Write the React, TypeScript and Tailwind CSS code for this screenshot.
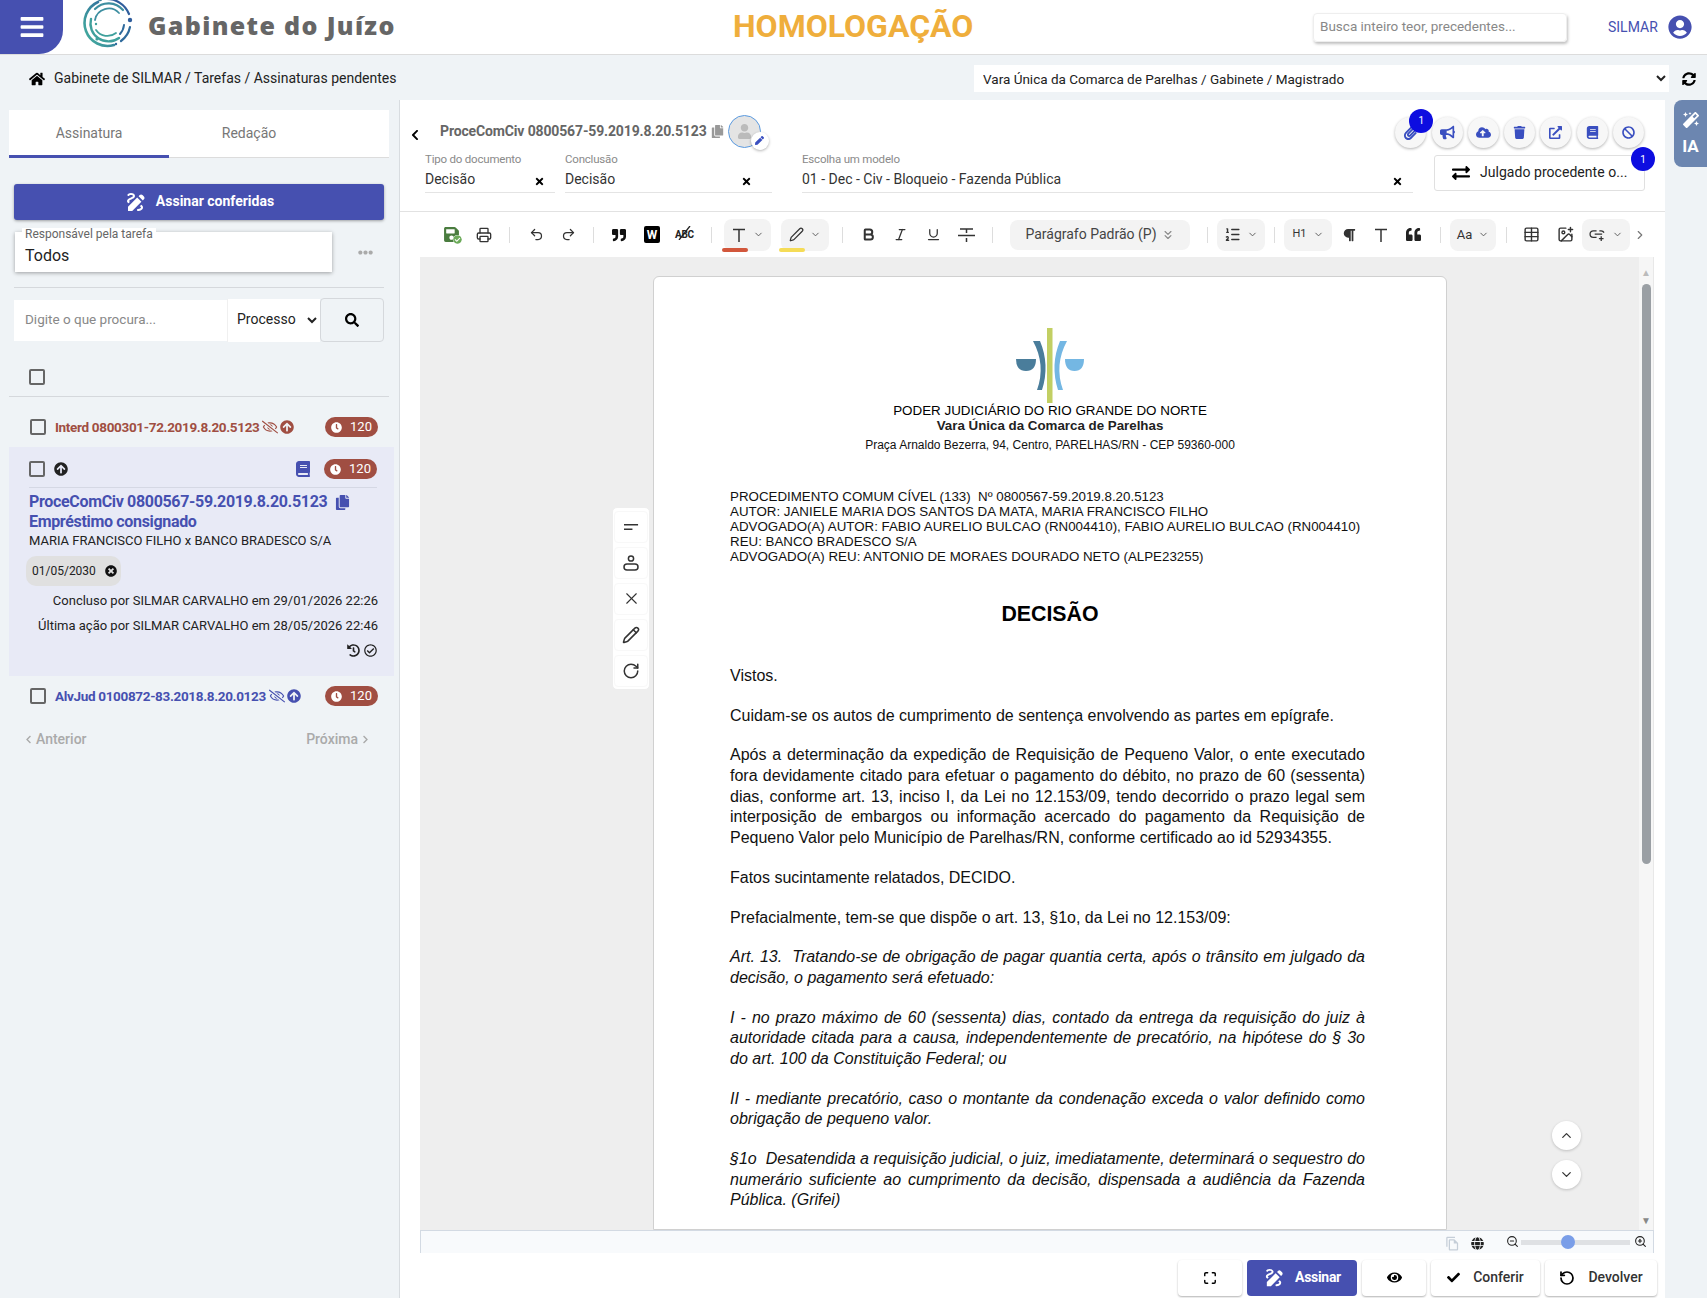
import type { ReactNode } from 'react';
import {
  FaArrowCircleUp, FaBan, FaBars, FaBook, FaBullhorn, FaCheck, FaCheckCircle, FaChevronLeft, FaChevronRight, FaClock,
  FaCloudUploadAlt, FaCopy, FaEllipsisH, FaExchangeAlt, FaExternalLinkAlt, FaEye, FaGlobe, FaHistory, FaHome,
  FaMagic, FaParagraph, FaPaperclip, FaPen, FaQuoteLeft, FaQuoteRight, FaRegCheckCircle, FaRegEyeSlash, FaSave, FaSearch, FaSyncAlt,
  FaTimes, FaTimesCircle, FaTrash, FaUser, FaUserCircle,
} from 'react-icons/fa';
import { MdDraw, MdOutlineFileCopy } from 'react-icons/md';
import {
  Bold, ChevronDown, ChevronRight, ChevronUp, ChevronsDown, ImagePlus, Italic, ListOrdered, Maximize,
  Pen, Pencil, Printer, Redo2, RotateCcw, RotateCw, Table, Underline, Undo2, X,
  ZoomIn, ZoomOut,
} from 'lucide-react';

// Logo do sistema (arcos concentricos)
function CircleLogo() {
  return (
    <svg viewBox="0 0 50 50" className="w-[50px] h-[50px]" fill="none" strokeLinecap="round">
      <defs>
        <linearGradient id="lg" x1="0" y1="1" x2="1" y2="0">
          <stop offset="0" stopColor="#45b39d" />
          <stop offset="1" stopColor="#2c5f9e" />
        </linearGradient>
      </defs>
      <path d="M15 4 A23 23 0 0 0 31 47" stroke="url(#lg)" strokeWidth="2.6" />
      <path d="M22 1 A24 24 0 0 1 46 16" stroke="#2f5d9c" strokeWidth="2.2" />
      <path d="M47 29 A23 23 0 0 1 38 43" stroke="#2f6a9c" strokeWidth="2.2" />
      <path d="M40 12 A19 19 0 0 0 12 11" stroke="#3d8ea0" strokeWidth="2.2" />
      <path d="M8 21 A18 18 0 0 0 36 40" stroke="#3fa09c" strokeWidth="2.4" />
      <path d="M37 36 A16 16 0 0 0 41 27" stroke="#2f6a9c" strokeWidth="2" />
      <path d="M36 15 A14 14 0 0 0 12 22" stroke="#3d8ea0" strokeWidth="1.8" />
      <path d="M13 32 A14 14 0 0 0 33 35" stroke="#3fa09c" strokeWidth="1.8" />
      <circle cx="17" cy="1" r="2.2" fill="#3a7f9c" />
      <circle cx="47" cy="22" r="2.2" fill="#2f5d9c" />
      <circle cx="13" cy="26" r="1.2" fill="#3fa09c" />
      <circle cx="14" cy="41" r="1.6" fill="#3fa09c" />
      <circle cx="33" cy="46" r="1.2" fill="#2f6a9c" />
    </svg>
  );
}

// Brasao do tribunal
function CourtLogo() {
  return (
    <svg viewBox="0 0 68 75" className="w-[68px] h-[75px]">
      <rect x="31" y="0" width="5.5" height="75" fill="#c2cf63" />
      <path d="M17 13 L24 13 Q34 37 26 62 L21 62 Q30 37 17 13 Z" fill="#4a7d9b" />
      <path d="M51 13 L44 13 Q34 37 42 62 L47 62 Q38 37 51 13 Z" fill="#74b7e3" />
      <path d="M0 31 H20 Q20 43 10 43 Q0 43 0 31 Z" fill="#4a7d9b" />
      <path d="M49 31 H68 Q68 43 58.5 43 Q49 43 49 31 Z" fill="#74b7e3" />
    </svg>
  );
}

function Badge120() {
  return (
    <span className="w-[53px] h-[20px] rounded-full bg-[#a04e42] text-white text-[13px] flex items-center justify-center gap-[8px] shrink-0">
      <FaClock className="text-[11px]" />
      120
    </span>
  );
}

function Box() {
  return <span className="w-[16px] h-[16px] border-2 border-[#666] rounded-[2px] shrink-0" />;
}

function RoundAction({ children, badge }: { children: ReactNode; badge?: boolean }) {
  return (
    <span className="relative w-[31px] h-[31px] rounded-full bg-[#f7f7f7] shadow-[0_1px_3px_rgba(0,0,0,0.3)] text-[#3a4fc0] flex items-center justify-center text-[15px]">
      {children}
      {badge && (
        <span className="absolute -top-[8px] left-[14px] w-[24px] h-[24px] rounded-full bg-[#0d0de0] text-white text-[10px] flex items-center justify-center">1</span>
      )}
    </span>
  );
}

function Sep({ className }: { className: string }) {
  return <span className={`w-px h-[16px] bg-[#ddd] shrink-0 ${className}`} />;
}

function Drop({ children, className = '' }: { children: ReactNode; className?: string }) {
  return (
    <span className={`h-[32px] rounded-[8px] bg-[#f3f3f3] flex items-center justify-center gap-[6px] text-[#333] shrink-0 ${className}`}>
      {children}
      <ChevronDown size={11} className="text-[#555]" />
    </span>
  );
}

function Field({ label, value, className, inset }: { label: string; value: string; className: string; inset: string }) {
  return (
    <div className={`h-[41px] border-b border-[#e4e4e4] relative ${className}`}>
      <div className="text-[11.5px] text-[#8a8a8a] leading-[14px] tracking-[-0.2px]">{label}</div>
      <div className="text-[14px] text-[#333] leading-[20px] mt-[3px]">{value}</div>
      <FaTimes className={`absolute top-[24px] text-[11px] text-black ${inset}`} />
    </div>
  );
}

function TIcon() {
  return (
    <svg viewBox="0 0 16 16" className="w-[16px] h-[16px]" fill="none" stroke="#333" strokeWidth="1.5"><path d="M2 2.5H14M8 2.5V15" /></svg>
  );
}

function FloatBtn({ children }: { children: ReactNode }) {
  return <span className="w-[34px] h-[32px] flex items-center justify-center text-[#333] border border-[#f8f8f8] rounded-[4px]">{children}</span>;
}

function BottomBtn({ children, className = '' }: { children: ReactNode; className?: string }) {
  return (
    <button className={`h-[36px] rounded-[4px] bg-white shadow-[0_1px_2px_rgba(0,0,0,0.3)] flex items-center justify-center text-[14px] text-[#333] font-medium ${className}`}>
      {children}
    </button>
  );
}

function Para({ children, italic }: { children: ReactNode; italic?: boolean }) {
  return <p className={`text-justify mb-[19px] ${italic ? 'italic' : ''}`}>{children}</p>;
}

export default function App() {
  return (
    <div className="w-[1707px] h-[1298px] overflow-hidden bg-[#eff3f6] flex flex-col font-[family-name:Roboto,sans-serif] text-[#333]">
      {/* Header */}
      <header className="h-[55px] shrink-0 bg-white border-b border-[#dcdcdc] flex items-center">
        <div className="w-[63px] h-[54px] bg-[#4650b0] rounded-br-[24px] flex items-center justify-center text-white text-[26px]">
          <FaBars />
        </div>
        <div className="ml-[20px] -mt-[8px]"><CircleLogo /></div>
        <div className="ml-[15px] w-[248px] whitespace-nowrap text-[25px] font-extrabold text-[#666] tracking-[1.35px] font-[family-name:'Open_Sans',sans-serif] -mt-[3px]">Gabinete do Juízo</div>
        <div className="ml-[337px] text-[32px] font-bold text-[#efae3c] leading-none w-[580px] -mt-[2px]">HOMOLOGAÇÃO</div>
        <div className="w-[254px] h-[29px] rounded-[4px] border border-[#eee] shadow-[1px_2px_3px_rgba(0,0,0,0.25)] text-[13.5px] text-[#888] px-[6px] pb-[1px] flex items-center">Busca inteiro teor, precedentes...</div>
        <div className="ml-[41px] text-[14px] text-[#4650b0]">SILMAR</div>
        <FaUserCircle className="ml-[10px] text-[24px] text-[#4650b0]" />
      </header>

      {/* Breadcrumb */}
      <div className="h-[45px] shrink-0 flex items-center relative pt-[2px]">
        <FaHome className="ml-[29px] text-[16px] text-black" />
        <span className="ml-[9px] text-[14px] w-[920px] text-[#222]">Gabinete de SILMAR / Tarefas / Assinaturas pendentes</span>
        <select className="w-[695px] h-[27px] bg-white text-[13.5px] text-[#222] px-[5px] outline-none">
          <option>Vara Única da Comarca de Parelhas / Gabinete / Magistrado</option>
        </select>
        <FaSyncAlt className="ml-[13px] text-[14px] text-black" />
      </div>

      <div className="flex-1 flex min-h-0">
        {/* Left panel */}
        <aside className="w-[400px] shrink-0 border-r border-[#d8dce0] pt-[10px] flex flex-col">
          <div className="ml-[9px] w-[380px] h-[48px] bg-white border-b border-[#dcdcdc] flex text-[14px] text-[#777]">
            <div className="w-[160px] h-[48px] border-b-[3px] border-[#4650b0] flex items-center justify-center pt-[1px]">Assinatura</div>
            <div className="w-[160px] flex items-center justify-center">Redação</div>
          </div>
          <button className="ml-[14px] mt-[26px] w-[370px] h-[36px] rounded-[3px] bg-[#4650b0] shadow-[0_1px_3px_rgba(0,0,0,0.35)] text-white text-[14px] font-bold flex items-center justify-center gap-[8px] pb-[1px]">
            <MdDraw className="text-[24px]" />
            Assinar conferidas
          </button>
          <div className="ml-[15px] mt-[12px] flex items-center h-[40px]">
            <div className="relative w-[317px] h-[40px] bg-white shadow-[0_1px_4px_rgba(0,0,0,0.35)] text-[16px] text-[#222] pl-[10px] pt-[12px] leading-[24px]">
              <span className="absolute left-[7px] -top-[4px] bg-white px-[3px] text-[12px] leading-[12px] text-[#666]">Responsável pela tarefa</span>
              Todos
            </div>
            <FaEllipsisH className="ml-[26px] text-[15px] text-[#aaa]" />
          </div>
          <div className="ml-[14px] w-[370px] mt-[15px] border-t border-[#d5d8dc]" />
          <div className="ml-[14px] mt-[10px] flex items-center w-[370px]">
            <div className="w-[213px] h-[41px] bg-white text-[13.5px] text-[#888] pl-[11px] pb-[1px] flex items-center">Digite o que procura...</div>
            <select className="w-[93px] h-[43px] bg-white text-[14px] text-[#222] pl-[5px] pb-[2px] outline-none border-l border-[#f0f0f0]">
              <option>Processo</option>
            </select>
            <div className="w-[64px] h-[44px] rounded-[4px] border border-[#d5d8dc] flex items-center justify-center text-black text-[14px]">
              <FaSearch />
            </div>
          </div>
          <div className="ml-[9px] w-[380px] h-[55px] border-b border-[#d5d8dc] flex items-center pl-[20px] pt-[15px]">
            <Box />
          </div>
          <div className="h-[50px] flex items-center pl-[30px] pr-[21px] pt-[10px]">
            <Box />
            <span className="ml-[9px] text-[13.5px] font-bold text-[#a04e42] tracking-[-0.33px]">Interd 0800301-72.2019.8.20.5123</span>
            <FaRegEyeSlash className="ml-[3px] text-[16px] text-[#a04e42]" />
            <FaArrowCircleUp className="ml-[2px] text-[14px] text-[#a04e42]" />
            <span className="ml-auto"><Badge120 /></span>
          </div>
          <div className="ml-[9px] w-[385px] h-[229px] bg-[#e8eaf6] pl-[20px] pr-[17px] pt-[9px]">
            <div className="flex items-center h-[26px]">
              <Box />
              <FaArrowCircleUp className="ml-[9px] text-[14px] text-[#222]" />
              <FaBook className="ml-auto text-[16px] text-[#4650b0]" />
              <span className="ml-[13px]"><Badge120 /></span>
            </div>
            <div className="border-t border-[#d5d8e4] mt-[5px] pt-[4px] text-[16px] leading-[20px] font-bold text-[#4650b0] tracking-[-0.33px]">
              <div className="flex items-center">ProceComCiv 0800567-59.2019.8.20.5123<FaCopy className="ml-[8px] text-[15px]" /></div>
              <div>Empréstimo consignado</div>
            </div>
            <div className="-mt-[1px] text-[13px] leading-[20px] text-[#222]">MARIA FRANCISCO FILHO x BANCO BRADESCO S/A</div>
            <div className="-ml-[3px] mt-[5px] w-[95px] h-[30px] rounded-[10px] bg-[#e0e0e0] text-[12px] text-[#222] flex items-center pl-[6px]">
              01/05/2030
              <FaTimesCircle className="ml-[9px] text-[12px] text-[#111]" />
            </div>
            <div className="mt-[2px] -mr-[1px] text-[13px] leading-[25px] text-right text-[#222]">
              <div>Concluso por SILMAR CARVALHO em 29/01/2026 22:26</div>
              <div>Última ação por SILMAR CARVALHO em 28/05/2026 22:46</div>
            </div>
            <div className="flex justify-end items-center gap-[4px] mt-[6px] text-[13px] text-[#222]">
              <FaHistory />
              <FaRegCheckCircle />
            </div>
          </div>
          <div className="h-[40px] flex items-center pl-[30px] pr-[21px]">
            <Box />
            <span className="ml-[9px] text-[13.5px] font-bold text-[#4650b0] tracking-[-0.33px]">AlvJud 0100872-83.2018.8.20.0123</span>
            <FaRegEyeSlash className="ml-[3px] text-[16px] text-[#4650b0]" />
            <FaArrowCircleUp className="ml-[2px] text-[14px] text-[#4650b0]" />
            <span className="ml-auto"><Badge120 /></span>
          </div>
          <div className="mt-[3px] h-[40px] flex items-center justify-between pl-[24px] pr-[29px] text-[14px] font-medium text-[#aaa]">
            <span className="flex items-center gap-[3px]"><FaChevronLeft className="text-[9px]" />Anterior</span>
            <span className="flex items-center gap-[3px]">Próxima<FaChevronRight className="text-[9px]" /></span>
          </div>
        </aside>

        {/* Document panel */}
        <main className="w-[1265px] shrink-0 bg-white flex flex-col min-h-0">
          <div className="h-[112px] shrink-0 border-b border-[#e2e2e2]">
            <div className="h-[62px] flex items-center pl-[9px]">
              <FaChevronLeft className="text-[12px] text-black mt-[8px]" />
              <span className="ml-[19px] text-[14px] font-bold text-[#666] tracking-[-0.14px]">ProceComCiv 0800567-59.2019.8.20.5123</span>
              <FaCopy className="ml-[4px] text-[13px] text-[#999]" />
              <span className="relative ml-[4px] w-[33px] h-[33px] rounded-full bg-[#e4e4e4] border border-[#5a9ae0] flex items-center justify-center text-[#bbb] text-[15px]">
                <FaUser />
                <span className="absolute -right-[9px] -bottom-[3px] w-[18px] h-[18px] rounded-full bg-white shadow-[0_1px_3px_rgba(0,0,0,0.3)] flex items-center justify-center text-[#3a4fc0] text-[9px]"><FaPen /></span>
              </span>
              <div className="ml-auto mr-[21px] flex items-center gap-[5.3px] mt-[2px]">
                <RoundAction badge><FaPaperclip /></RoundAction>
                <RoundAction><FaBullhorn /></RoundAction>
                <RoundAction><FaCloudUploadAlt /></RoundAction>
                <RoundAction><FaTrash className="text-[13px]" /></RoundAction>
                <RoundAction><FaExternalLinkAlt className="text-[13px]" /></RoundAction>
                <RoundAction><FaBook className="text-[13px]" /></RoundAction>
                <RoundAction><FaBan className="text-[13px]" /></RoundAction>
              </div>
            </div>
            <div className="flex pl-[25px] -mt-[10px] items-start">
              <Field label="Tipo do documento" value="Decisão" className="w-[130px]" inset="right-[10px]" />
              <Field label="Conclusão" value="Decisão" className="w-[207px] ml-[10px]" inset="right-[20px]" />
              <Field label="Escolha um modelo" value="01 - Dec - Civ - Bloqueio - Fazenda Pública" className="w-[611px] ml-[30px]" inset="right-[10px]" />
              <div className="relative ml-[21px] mt-[3px] w-[211px] h-[36px] rounded-[3px] border border-[#e0e0e0] flex items-center pl-[17px] gap-[10px] text-[14px] text-[#222] tracking-[0.04px] pb-[1px]">
                <FaExchangeAlt className="text-[18px] text-black" />
                Julgado procedente o...
                <span className="absolute -right-[11px] -top-[9px] w-[24px] h-[24px] rounded-full bg-[#0d0de0] text-white text-[10px] flex items-center justify-center">1</span>
              </div>
            </div>
          </div>

          {/* Toolbar */}
          <div className="h-[45px] shrink-0 flex items-center pl-[43px] text-[#333]">
            <span className="relative w-[17px] text-[17px] text-[#4a7c3f]">
              <FaSave />
              <FaCheckCircle className="absolute -right-[2px] -bottom-[1px] text-[9px] text-[#6cab5a] bg-white rounded-full" />
            </span>
            <Printer size={16} className="ml-[16px]" />
            <Sep className="ml-[17px]" />
            <Undo2 size={15} className="ml-[19px]" />
            <Redo2 size={15} className="ml-[17px]" />
            <Sep className="ml-[17px]" />
            <FaQuoteRight className="ml-[18px] text-[14px] text-[#111]" />
            <span className="ml-[18px] w-[16px] h-[17px] rounded-[2px] bg-black text-white text-[12px] font-bold flex items-center justify-center">W</span>
            <span className="relative ml-[15px] w-[20px] text-[10px] font-bold text-[#222] tracking-[-0.3px]">
              ABC
              <svg viewBox="0 0 20 14" className="absolute left-0 -top-[1px] w-[20px] h-[14px]"><path d="M4 14L15 0" stroke="#222" strokeWidth="1.3" /></svg>
            </span>
            <Sep className="ml-[16px]" />
            <span className="relative ml-[12px]">
              <Drop className="w-[47px]"><TIcon /></Drop>
              <span className="absolute left-[-2px] bottom-[-1px] w-[26px] h-[4px] rounded-[2px] bg-[#d2573c]" />
            </span>
            <span className="relative ml-[10px]">
              <Drop className="w-[48px]"><Pen size={15} /></Drop>
              <span className="absolute left-[-2px] bottom-[-1px] w-[26px] h-[4px] rounded-[2px] bg-[#f5dc57]" />
            </span>
            <Sep className="ml-[13px]" />
            <Bold size={15} strokeWidth={3.2} className="ml-[18px]" />
            <Italic size={15} className="ml-[17px]" />
            <Underline size={15} className="ml-[18px]" />
            <svg viewBox="0 0 17 16" className="ml-[17px] w-[17px] h-[16px]" fill="none" stroke="#333" strokeWidth="1.5"><path d="M2 2H15M8.5 2V6M0 8.5H17M8.5 11V15" /></svg>
            <Sep className="ml-[17px]" />
            <span className="ml-[17px] w-[180px] h-[30px] rounded-[8px] bg-[#f3f3f3] flex items-center justify-center gap-[4px] text-[14px] text-[#444] shrink-0">
              Parágrafo Padrão (P)
              <ChevronsDown size={14} className="text-[#888]" />
            </span>
            <Sep className="ml-[17px]" />
            <Drop className="ml-[9px] w-[48px]"><ListOrdered size={17} /></Drop>
            <Sep className="ml-[9px]" />
            <Drop className="ml-[9px] w-[48px] text-[11px]">H1</Drop>
            <FaParagraph className="ml-[9px] text-[14px] w-[16px]" />
            <span className="ml-[16px]"><TIcon /></span>
            <FaQuoteLeft className="ml-[17px] text-[15px] text-[#222]" />
            <Sep className="ml-[19px]" />
            <Drop className="ml-[9px] w-[46px] text-[13px]">Aa</Drop>
            <Sep className="ml-[10px]" />
            <Table size={17} className="ml-[16px]" />
            <ImagePlus size={17} className="ml-[17px]" />
            <Drop className="ml-[8px] w-[48px]">
              <svg viewBox="0 0 18 14" className="w-[17px] h-[13px]" fill="none" stroke="#333" strokeWidth="1.4"><path d="M8 3H4.5a3.5 3.5 0 0 0 0 7H8M6 6.5H14M11 3H13a3.5 3.5 0 0 1 3 2M13 9V14M10.5 11.5H15.5" /></svg>
            </Drop>
            <ChevronRight size={14} className="ml-[3px] text-[#777]" />
          </div>

          {/* Editor */}
          <div className="relative flex-1 min-h-0 ml-[20px] mr-[11px] bg-[#eee] overflow-hidden flex">
            <div className="ml-[233px] mt-[19px] w-[794px] shrink-0 bg-white border border-[#d0d0d0] rounded-t-[6px] pl-[76px] pr-[81px] pt-[51px] font-[family-name:'Liberation_Sans',Arial,sans-serif] text-[16px] leading-[20.68px] text-[#111]">
              <div className="flex justify-center pl-[5px]"><CourtLogo /></div>
              <div className="-mr-[5px] text-center text-[13.4px] leading-[15px] text-black">PODER JUDICIÁRIO DO RIO GRANDE DO NORTE</div>
              <div className="-mr-[5px] text-center text-[13.33px] leading-[15px] font-bold text-[#222]">Vara Única da Comarca de Parelhas</div>
              <div className="-mr-[5px] text-center text-[12px] leading-[15px] mt-[5px]">Praça Arnaldo Bezerra, 94, Centro, PARELHAS/RN - CEP 59360-000</div>
              <div className="text-[13.33px] leading-[15px] mt-[36px] whitespace-pre">
                <div>PROCEDIMENTO COMUM CÍVEL (133)  Nº 0800567-59.2019.8.20.5123</div>
                <div>AUTOR: JANIELE MARIA DOS SANTOS DA MATA, MARIA FRANCISCO FILHO</div>
                <div>ADVOGADO(A) AUTOR: FABIO AURELIO BULCAO (RN004410), FABIO AURELIO BULCAO (RN004410)</div>
                <div>REU: BANCO BRADESCO S/A</div>
                <div>ADVOGADO(A) REU: ANTONIO DE MORAES DOURADO NETO (ALPE23255)</div>
              </div>
              <div className="-mr-[5px] text-center text-[21.33px] leading-[24px] font-bold mt-[38px] mb-[40px] text-black">DECISÃO</div>
              <Para>Vistos.</Para>
              <Para>Cuidam-se os autos de cumprimento de sentença envolvendo as partes em epígrafe.</Para>
              <Para>Após a determinação da expedição de Requisição de Pequeno Valor, o ente executado fora devidamente citado para efetuar o pagamento do débito, no prazo de 60 (sessenta) dias, conforme art. 13, inciso I, da Lei no 12.153/09, tendo decorrido o prazo legal sem interposição de embargos ou informação acercado do pagamento da Requisição de Pequeno Valor pelo Município de Parelhas/RN, conforme certificado ao id 52934355.</Para>
              <Para>Fatos sucintamente relatados, DECIDO.</Para>
              <Para>Prefacialmente, tem-se que dispõe o art. 13, §1o, da Lei no 12.153/09:</Para>
              <Para italic>Art. 13.&nbsp; Tratando-se de obrigação de pagar quantia certa, após o trânsito em julgado da decisão, o pagamento será efetuado:</Para>
              <Para italic>I - no prazo máximo de 60 (sessenta) dias, contado da entrega da requisição do juiz à autoridade citada para a causa, independentemente de precatório, na hipótese do § 3o do art. 100 da Constituição Federal; ou</Para>
              <Para italic>II - mediante precatório, caso o montante da condenação exceda o valor definido como obrigação de pequeno valor.</Para>
              <Para italic>§1o&nbsp; Desatendida a requisição judicial, o juiz, imediatamente, determinará o sequestro do numerário suficiente ao cumprimento da decisão, dispensada a audiência da Fazenda Pública. (Grifei)</Para>
            </div>

            {/* Barra de rolagem */}
            <div className="ml-auto w-[15px] shrink-0 bg-[#f6f6f6] border-r border-[#e8e8e8] flex flex-col items-center pt-[11px] pb-[4px]">
              <span className="text-[10px] leading-[10px] text-[#bbb]">▲</span>
              <span className="mt-[6px] w-[9px] h-[580px] rounded-full bg-[#9a9fa4]" />
              <span className="mt-auto text-[10px] leading-[10px] text-[#888]">▼</span>
            </div>

            {/* Ferramentas flutuantes */}
            <div className="absolute left-[192px] top-[250px] w-[38px] h-[183px] bg-white rounded-[5px] border border-[#eee] flex flex-col items-center justify-center gap-[4px]">
              <FloatBtn>
                <svg viewBox="0 0 16 8" className="w-[15px] h-[8px]"><path d="M0 1.5H15M0 6.5H9" stroke="#333" strokeWidth="1.6" /></svg>
              </FloatBtn>
              <FloatBtn>
                <svg viewBox="0 0 16 16" className="w-[16px] h-[16px]" fill="none" stroke="#333" strokeWidth="1.5"><circle cx="8" cy="3.5" r="2.6" /><rect x="1" y="9" width="14" height="6" rx="3" /></svg>
              </FloatBtn>
              <FloatBtn><X size={19} strokeWidth={1.4} /></FloatBtn>
              <FloatBtn><Pencil size={18} /></FloatBtn>
              <FloatBtn><RotateCw size={18} /></FloatBtn>
            </div>
            <div className="absolute left-[1132px] top-[864px] flex flex-col gap-[10px]">
              <span className="w-[29px] h-[29px] rounded-full bg-white shadow-[0_1px_3px_rgba(0,0,0,0.2)] flex items-center justify-center"><ChevronUp size={15} /></span>
              <span className="w-[29px] h-[29px] rounded-full bg-white shadow-[0_1px_3px_rgba(0,0,0,0.2)] flex items-center justify-center"><ChevronDown size={15} /></span>
            </div>
          </div>

          {/* Status */}
          <div className="h-[23px] shrink-0 ml-[20px] mr-[11px] border-t border-r border-l border-[#d3dae3] bg-[#f8fafc] flex items-center justify-end pr-[6px] text-[#222]">
            <MdOutlineFileCopy className="text-[15px] text-[#c5ced8] mt-[3px]" />
            <FaGlobe className="ml-[11px] text-[13px] mt-[3px]" />
            <ZoomOut size={13} className="ml-[22px] -mt-[2px]" />
            <span className="relative ml-[2px] w-[109px] h-[5px] bg-[#dfe1e4]">
              <span className="absolute left-[40px] -top-[5px] w-[14px] h-[14px] rounded-full bg-[#7a9ee8]" />
            </span>
            <ZoomIn size={13} className="ml-[4px] -mt-[2px]" />
          </div>

          {/* Acoes */}
          <div className="h-[45px] shrink-0 flex items-center justify-end gap-[5px] pr-[8px] pt-[4px]">
            <BottomBtn className="w-[64px]"><Maximize size={14} strokeWidth={2.4} className="text-black" /></BottomBtn>
            <button className="w-[110px] h-[36px] rounded-[4px] bg-[#4650b0] text-white text-[14px] font-bold flex items-center justify-center gap-[9px] tracking-[-0.3px]">
              <MdDraw className="text-[23px]" />
              Assinar
            </button>
            <BottomBtn className="w-[64px]"><FaEye className="text-[15px] text-black" /></BottomBtn>
            <BottomBtn className="w-[109px] gap-[13px]"><FaCheck className="text-[13px] text-black" />Conferir</BottomBtn>
            <BottomBtn className="w-[112px] gap-[13px]"><RotateCcw size={16} strokeWidth={2.6} className="text-black" />Devolver</BottomBtn>
          </div>
        </main>

        {/* Aba IA */}
        <div className="ml-[9px] w-[33px] h-[67px] rounded-l-[8px] bg-[#6c86b0] text-white flex flex-col items-center pt-[12px] gap-[8px]">
          <FaMagic className="text-[16px]" />
          <span className="text-[17px] font-bold leading-[20px]">IA</span>
        </div>
      </div>
    </div>
  );
}
